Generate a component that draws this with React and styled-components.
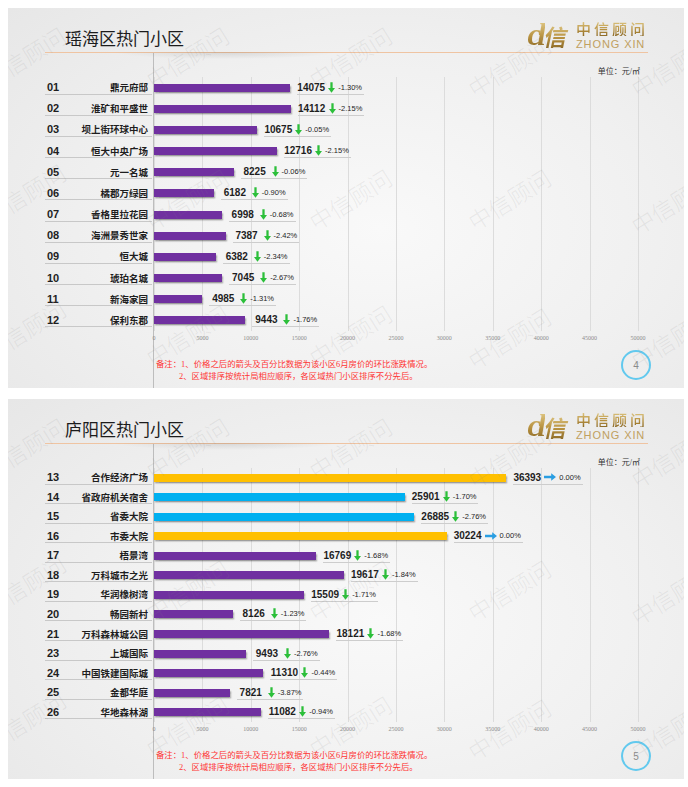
import React from "react";
import styled, { createGlobalStyle } from "styled-components";

// 50000 on the axis sits 484px right of the axis line
const SCALE = 484 / 50000;
const TICKS = [0, 5000, 10000, 15000, 20000, 25000, 30000, 35000, 40000, 45000, 50000];

const PURPLE = "#7030a0";
const YELLOW = "#ffc000";
const BLUE = "#00b0f0";

const slides = [
  {
    title: "瑶海区热门小区",
    page: 4,
    rows: [
      ["01", "鼎元府邸", 14075, "-1.30%"],
      ["02", "淮矿和平盛世", 14112, "-2.15%"],
      ["03", "坝上街环球中心", 10675, "-0.05%"],
      ["04", "恒大中央广场", 12716, "-2.15%"],
      ["05", "元一名城", 8225, "-0.06%"],
      ["06", "橘郡万绿园", 6182, "-0.90%"],
      ["07", "香格里拉花园", 6998, "-0.68%"],
      ["08", "海洲景秀世家", 7387, "-2.42%"],
      ["09", "恒大城", 6382, "-2.34%"],
      ["10", "琥珀名城", 7045, "-2.67%"],
      ["11", "新海家园", 4985, "-1.31%"],
      ["12", "保利东郡", 9443, "-1.76%"],
    ],
  },
  {
    title: "庐阳区热门小区",
    page: 5,
    rows: [
      ["13", "合作经济广场", 36393, "0.00%", YELLOW],
      ["14", "省政府机关宿舍", 25901, "-1.70%", BLUE],
      ["15", "省委大院", 26885, "-2.76%", BLUE],
      ["16", "市委大院", 30224, "0.00%", YELLOW],
      ["17", "梧景湾", 16769, "-1.68%"],
      ["18", "万科城市之光", 19617, "-1.84%"],
      ["19", "华润橡树湾", 15509, "-1.71%"],
      ["20", "畅园新村", 8126, "-1.23%"],
      ["21", "万科森林城公园", 18121, "-1.68%"],
      ["23", "上城国际", 9493, "-2.76%"],
      ["24", "中国铁建国际城", 11310, "-0.44%"],
      ["25", "金都华庭", 7821, "-3.87%"],
      ["26", "华地森林湖", 11082, "-0.94%"],
    ],
  },
];

// watermark centres, relative to each slide
const marks = [
  [16, 49], [179, 49], [342, 49], [501, 58], [664, 58],
  [16, 186], [179, 191], [342, 191], [501, 191], [664, 195],
  [16, 322], [179, 327], [342, 327], [501, 330], [664, 330],
];

const GlobalStyle = createGlobalStyle`
  body {
    margin: 0;
    background: #ffffff;
  }
`;

const Page = styled.div`
  display: flex;
  flex-direction: column;
  gap: 11px;
  padding: 8px 4px 8px 8px;
`;

const Slide = styled.section`
  position: relative;
  width: 676px;
  height: 380px;
  display: flex;
  flex-direction: column;
  overflow: hidden;
  background: radial-gradient(ellipse 75% 85% at 55% 58%, #f9f9f9 0%, #f0f0f0 55%, #e7e7e7 100%);
  font-family: "Noto Sans CJK SC", sans-serif;
`;

const Header = styled.header`
  position: relative;
  height: 45px;
  box-sizing: border-box;
  margin: 0 36px 0 37px;
  padding: 0 0 1px 20px;
  display: flex;
  justify-content: space-between;
  align-items: flex-end;
  border-bottom: 1.5px solid #efc4a2;

  &::after {
    content: "";
    position: absolute;
    left: 40px;
    top: 100%;
    width: 280px;
    height: 9px;
    background: radial-gradient(ellipse 50% 100% at 50% 0%, rgba(0, 0, 0, 0.1), transparent 80%);
  }
`;

const Title = styled.h1`
  margin: 0;
  padding-bottom: 3px;
  font-size: 17px;
  line-height: 20px;
  font-weight: 400;
  color: #1c1c1c;
`;

const Logo = styled.div`
  display: flex;
  align-items: center;
  gap: 8px;
  padding-bottom: 1px;
`;

const gold = `
  background: linear-gradient(180deg, #e0c987 0%, #b89240 55%, #8c6a28 100%);
  -webkit-background-clip: text;
  background-clip: text;
  color: transparent;
`;

const LogoMark = styled.div`
  display: flex;
  align-items: flex-end;
  height: 27px;
`;

const MarkLatin = styled.span`
  ${gold}
  font-family: "Liberation Serif", serif;
  font-style: italic;
  font-weight: 700;
  font-size: 31px;
  line-height: 28px;
  letter-spacing: -4px;
  padding-right: 3px;
`;

const MarkHan = styled.span`
  ${gold}
  display: inline-block;
  font-size: 23px;
  line-height: 26px;
  font-weight: 700;
  transform: skewX(-12deg);
`;

const LogoText = styled.div`
  display: flex;
  flex-direction: column;
  gap: 3px;
`;

const LogoCn = styled.div`
  ${gold}
  font-size: 15px;
  line-height: 15px;
  font-weight: 500;
  letter-spacing: 3px;
`;

const LogoEn = styled.div`
  color: #c0a060;
  font-family: "Liberation Sans", sans-serif;
  font-size: 11px;
  line-height: 11px;
  letter-spacing: 0.9px;
`;

const Chart = styled.div`
  flex: 1;
  display: flex;
`;

const LabelCol = styled.div`
  width: 145px;
  box-sizing: border-box;
  padding: 24px 1px 0 37px;
`;

const LabelList = styled.div`
  height: 254px;
  display: flex;
  flex-direction: column;
`;

const LabelRow = styled.div`
  flex: 1;
  display: flex;
  align-items: center;
`;

const LabelCell = styled.div`
  flex: 1;
  height: 13px;
  display: flex;
  justify-content: space-between;
  align-items: center;
  padding: 0 4px 0 2px;
  border-bottom: 1px solid #c8c8c8;
  color: #1e1e1e;
`;

const Num = styled.span`
  font-family: "Liberation Sans", sans-serif;
  font-weight: 700;
  font-size: 11px;
`;

const Name = styled.span`
  font-weight: 700;
  font-size: 9.5px;
`;

const PlotCol = styled.div`
  flex: 1;
  display: flex;
  flex-direction: column;
  border-left: 1px solid #bdbdbd;
`;

const Unit = styled.div`
  height: 24px;
  display: flex;
  justify-content: flex-end;
  align-items: flex-end;
  padding-right: 44px;
  font-family: "Liberation Serif", "Noto Sans CJK SC", serif;
  font-size: 8px;
  line-height: 10px;
  color: #333;
`;

const PlotArea = styled.div`
  height: 254px;
  display: flex;
  flex-direction: column;
  background: repeating-linear-gradient(
    to right,
    #dcdcdc 0,
    #dcdcdc 1px,
    transparent 1px,
    transparent 48.4px
  );
`;

const BarRow = styled.div`
  flex: 1;
  display: flex;
  align-items: center;
`;

const Bar = styled.div`
  height: 8px;
  flex: none;
  background: ${(p) => p.$color};
  box-shadow: 1px 1.5px 1.5px rgba(0, 0, 0, 0.35);
`;

const DataLabel = styled.div`
  height: 13px;
  margin-left: 7px;
  padding-right: 2px;
  display: flex;
  align-items: center;
  gap: 3px;
  border-bottom: 1px solid #cdcdcd;
  font-family: "Liberation Sans", sans-serif;
  color: #1e1e1e;
`;

const Value = styled.span`
  min-width: 28px;
  text-align: center;
  font-weight: 700;
  font-size: 10px;
`;

const Pct = styled.span`
  font-size: 7.5px;
`;

const AxisRow = styled.div`
  display: flex;
  margin: 2px 0 0 -24.2px;
  height: 10px;
  align-items: center;
`;

const Tick = styled.span`
  flex: none;
  width: 48.4px;
  text-align: center;
  font-family: "Liberation Serif", serif;
  font-size: 6px;
  color: #8c8c8c;
`;

const Footer = styled.div`
  display: flex;
  justify-content: space-between;
  align-items: flex-start;
  margin-top: 7px;
  padding-right: 33px;
`;

const Note = styled.div`
  padding: 9px 0 0 2px;
  font-family: "Liberation Serif", "Noto Sans CJK SC", serif;
  font-size: 8.4px;
  line-height: 12px;
  color: #ff3535;
`;

const NoteLine = styled.div`
  padding-left: ${(p) => (p.$indent ? "23px" : "0")};
`;

const PageNum = styled.div`
  width: 30px;
  height: 30px;
  box-sizing: border-box;
  border: 2px solid #62c9ee;
  border-radius: 50%;
  display: flex;
  align-items: center;
  justify-content: center;
  font-family: "Liberation Sans", sans-serif;
  font-size: 10px;
  color: #8a8a8a;
`;

const Watermarks = styled.div`
  position: absolute;
  inset: 0;
  overflow: hidden;
  pointer-events: none;
`;

const Mark = styled.span`
  position: absolute;
  left: ${(p) => p.$x}px;
  top: ${(p) => p.$y}px;
  transform: translate(-50%, -50%) rotate(-32deg);
  white-space: nowrap;
  font-size: 23px;
  font-weight: 300;
  color: rgba(130, 130, 130, 0.13);
`;

function DownArrow() {
  return (
    <svg width="7" height="11" viewBox="0 0 8 12">
      <path d="M2.7 0 H5.3 V6.6 H8 L4 12 L0 6.6 H2.7 Z" fill="#2cbf3a" />
    </svg>
  );
}

function RightArrow() {
  return (
    <svg width="12" height="8" viewBox="0 0 13 8">
      <path d="M0 2.7 H7.8 V0 L13 4 L7.8 8 V5.3 H0 Z" fill="#2a9ee2" />
    </svg>
  );
}

function Board({ slide }) {
  return (
    <Slide>
      <Header>
        <Title>{slide.title}</Title>
        <Logo>
          <LogoMark>
            <MarkLatin>cl</MarkLatin>
            <MarkHan>信</MarkHan>
          </LogoMark>
          <LogoText>
            <LogoCn>中信顾问</LogoCn>
            <LogoEn>ZHONG XIN</LogoEn>
          </LogoText>
        </Logo>
      </Header>
      <Chart>
        <LabelCol>
          <LabelList>
            {slide.rows.map(([num, name]) => (
              <LabelRow key={num}>
                <LabelCell>
                  <Num>{num}</Num>
                  <Name>{name}</Name>
                </LabelCell>
              </LabelRow>
            ))}
          </LabelList>
        </LabelCol>
        <PlotCol>
          <Unit>单位：元/㎡</Unit>
          <PlotArea>
            {slide.rows.map(([num, , value, pct, color]) => (
              <BarRow key={num}>
                <Bar $color={color || PURPLE} style={{ width: value * SCALE }} />
                <DataLabel>
                  <Value>{value}</Value>
                  {pct === "0.00%" ? <RightArrow /> : <DownArrow />}
                  <Pct>{pct}</Pct>
                </DataLabel>
              </BarRow>
            ))}
          </PlotArea>
          <AxisRow>
            {TICKS.map((t) => (
              <Tick key={t}>{t}</Tick>
            ))}
          </AxisRow>
          <Footer>
            <Note>
              <NoteLine>备注：1、价格之后的箭头及百分比数据为该小区6月房价的环比涨跌情况。</NoteLine>
              <NoteLine $indent>2、区域排序按统计局相应顺序，各区域热门小区排序不分先后。</NoteLine>
            </Note>
            <PageNum>{slide.page}</PageNum>
          </Footer>
        </PlotCol>
      </Chart>
      <Watermarks>
        {marks.map(([x, y], i) => (
          <Mark key={i} $x={x} $y={y}>
            中信顾问
          </Mark>
        ))}
      </Watermarks>
    </Slide>
  );
}

export default function App() {
  return (
    <>
      <GlobalStyle />
      <Page>
        {slides.map((s) => (
          <Board key={s.page} slide={s} />
        ))}
      </Page>
    </>
  );
}
